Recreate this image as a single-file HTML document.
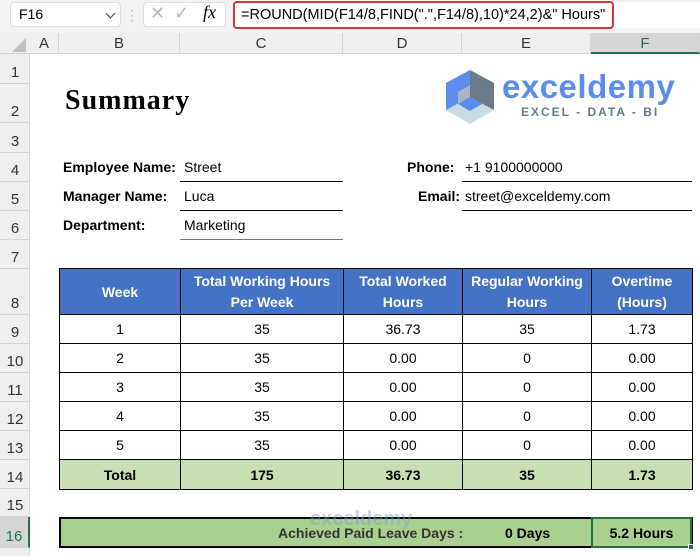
<!DOCTYPE html>
<html><head><style>
*{margin:0;padding:0;box-sizing:border-box}
body{width:700px;height:556px;overflow:hidden;background:#fff;font-family:"Liberation Sans",Calibri,sans-serif;position:relative;font-size:14px;color:#000}
.a{position:absolute}
.ch{position:absolute;top:33px;height:21px;border-right:1px solid #d4d4d4;text-align:center;font-size:15px;line-height:21px;color:#333}
.rh{position:absolute;left:0;width:30px;border-bottom:1px solid #d4d4d4;text-align:center;font-size:15px;color:#333;display:flex;align-items:flex-end;justify-content:center;padding-bottom:2px}
.c{position:absolute;display:flex;align-items:center;justify-content:center;border-right:1px solid #000;border-bottom:1px solid #000;font-size:14px}
.lbl{position:absolute;font-weight:bold;font-size:14px}
.val{position:absolute;font-size:14px}
.ul{position:absolute;height:1px;background:#000}
</style></head><body>
<div class="a" style="left:0;top:0;width:700px;height:33px;background:#f3f3f3"></div>
<div class="a" style="left:10px;top:2px;width:111px;height:25px;background:#fff;border:1px solid #ddd;border-radius:4px;font-size:14px;line-height:23px;padding-left:8px">F16<span class="a" style="left:96px;top:7px;width:7px;height:7px;border-right:1.5px solid #444;border-bottom:1.5px solid #444;transform:rotate(45deg)"></span></div>
<div class="a" style="left:130px;top:8px;color:#999;font-size:12px;line-height:5px">·<br>·<br>·</div>
<div class="a" style="left:143px;top:2px;width:83px;height:25px;background:#fff;border:1px solid #ddd;border-radius:4px"></div>
<div class="a" style="left:150px;top:3px;font-size:18px;color:#bbb">✕</div>
<div class="a" style="left:174px;top:3px;font-size:18px;color:#bbb">✓</div>
<div class="a" style="left:203px;top:2px;font-size:18px;font-style:italic;font-family:'Liberation Serif',serif">fx</div>
<div class="a" style="left:233px;top:1px;width:381px;height:28px;background:#fff;border:2px solid #d9343a;border-radius:4px;font-size:14.5px;line-height:24px;padding-left:6px">=ROUND(MID(F14/8,FIND(".",F14/8),10)*24,2)&amp;" Hours"</div>
<div class="a" style="left:614px;top:2px;width:86px;height:26px;background:#fff"></div>
<div class="a" style="left:0;top:33px;width:700px;height:21px;background:#efefef;border-bottom:1px solid #d4d4d4"></div>
<div class="a" style="left:0;top:54px;width:30px;height:502px;background:#efefef;border-right:1px solid #d4d4d4"></div>
<div class="a" style="left:12px;top:38px;width:0;height:0;border-left:14px solid transparent;border-bottom:14px solid #c0c0c0"></div>
<div class="ch" style="left:30px;width:29px">A</div>
<div class="ch" style="left:59px;width:121px">B</div>
<div class="ch" style="left:180px;width:163px">C</div>
<div class="ch" style="left:343px;width:119px">D</div>
<div class="ch" style="left:462px;width:129px">E</div>
<div class="ch" style="left:591px;width:109px;background:#d6d6d6;border-bottom:2px solid #217346;color:#217346">F</div>
<div class="rh" style="top:54px;height:30px">1</div>
<div class="rh" style="top:84px;height:39px">2</div>
<div class="rh" style="top:123px;height:30px">3</div>
<div class="rh" style="top:153px;height:29px">4</div>
<div class="rh" style="top:182px;height:29px">5</div>
<div class="rh" style="top:211px;height:29px">6</div>
<div class="rh" style="top:240px;height:29px">7</div>
<div class="rh" style="top:269px;height:46px">8</div>
<div class="rh" style="top:315px;height:29px">9</div>
<div class="rh" style="top:344px;height:29px">10</div>
<div class="rh" style="top:373px;height:29px">11</div>
<div class="rh" style="top:402px;height:29px">12</div>
<div class="rh" style="top:431px;height:29px">13</div>
<div class="rh" style="top:460px;height:29px">14</div>
<div class="rh" style="top:489px;height:28px">15</div>
<div class="rh" style="top:517px;height:31px;background:#d6d6d6;color:#217346;border-right:2px solid #217346">16</div>

<div class="a" style="left:65px;top:85px;font-family:'Liberation Serif',serif;font-weight:bold;font-size:28px;letter-spacing:1px">Summary</div>

<svg class="a" style="left:446px;top:70px" width="48" height="54" viewBox="0 0 48 54">
<polygon points="24,0 48,13 48,40 24,54 0,40 0,13" fill="#c9dbe3"/>
<polygon points="24,0 48,13 48,40 24,27" fill="#6b7a88"/>
<polygon points="24,0 0,13 0,40 24,27" fill="#5b8def"/>
<polygon points="12,22 24,15 36,22 36,34 24,41 12,34" fill="#a7b8c2"/>
<polygon points="12,34 24,27 36,34 24,41" fill="#5b8def"/>
<polygon points="24,15 36,22 36,34 24,27" fill="#6b7a88"/>
</svg>
<div class="a" style="left:502px;top:68px;font-size:33px;font-weight:bold;color:#5b8def;letter-spacing:0.5px">exceldemy</div>
<div class="a" style="left:521px;top:105px;font-size:12px;font-weight:bold;color:#6b7a88;letter-spacing:2px">EXCEL - DATA - BI</div>

<div class="lbl" style="left:63px;top:159px">Employee Name:</div>
<div class="val" style="left:184px;top:159px">Street</div>
<div class="ul" style="left:180px;top:181px;width:163px"></div>
<div class="lbl" style="left:63px;top:188px">Manager Name:</div>
<div class="val" style="left:184px;top:188px">Luca</div>
<div class="ul" style="left:180px;top:210px;width:163px"></div>
<div class="lbl" style="left:63px;top:217px">Department:</div>
<div class="val" style="left:184px;top:217px">Marketing</div>
<div class="ul" style="left:180px;top:239px;width:163px;background:#777"></div>
<div class="lbl" style="left:407px;top:159px">Phone:</div>
<div class="val" style="left:465px;top:159px">+1 9100000000</div>
<div class="ul" style="left:462px;top:181px;width:230px"></div>
<div class="lbl" style="left:418px;top:188px">Email:</div>
<div class="val" style="left:465px;top:188px">street@exceldemy.com</div>
<div class="ul" style="left:462px;top:210px;width:230px"></div>

<div class="a" style="left:59px;top:268px;width:634px;height:222px;border-left:1px solid #000;border-top:1px solid #000"></div>
<div class="c" style="left:60px;top:269px;width:121px;height:46px;background:#4472c4;color:#fff;font-weight:bold">Week</div>
<div class="c" style="left:181px;top:269px;width:163px;height:46px;background:#4472c4;color:#fff;font-weight:bold;text-align:center;line-height:21px">Total Working Hours<br>Per Week</div>
<div class="c" style="left:344px;top:269px;width:119px;height:46px;background:#4472c4;color:#fff;font-weight:bold;text-align:center;line-height:21px">Total Worked<br>Hours</div>
<div class="c" style="left:463px;top:269px;width:129px;height:46px;background:#4472c4;color:#fff;font-weight:bold;text-align:center;line-height:21px">Regular Working<br>Hours</div>
<div class="c" style="left:592px;top:269px;width:101px;height:46px;background:#4472c4;color:#fff;font-weight:bold;text-align:center;line-height:21px">Overtime<br>(Hours)</div>

<div class="c" style="left:60px;top:315px;width:121px;height:29px">1</div><div class="c" style="left:181px;top:315px;width:163px;height:29px">35</div><div class="c" style="left:344px;top:315px;width:119px;height:29px">36.73</div><div class="c" style="left:463px;top:315px;width:129px;height:29px">35</div><div class="c" style="left:592px;top:315px;width:101px;height:29px">1.73</div>
<div class="c" style="left:60px;top:344px;width:121px;height:29px">2</div><div class="c" style="left:181px;top:344px;width:163px;height:29px">35</div><div class="c" style="left:344px;top:344px;width:119px;height:29px">0.00</div><div class="c" style="left:463px;top:344px;width:129px;height:29px">0</div><div class="c" style="left:592px;top:344px;width:101px;height:29px">0.00</div>
<div class="c" style="left:60px;top:373px;width:121px;height:29px">3</div><div class="c" style="left:181px;top:373px;width:163px;height:29px">35</div><div class="c" style="left:344px;top:373px;width:119px;height:29px">0.00</div><div class="c" style="left:463px;top:373px;width:129px;height:29px">0</div><div class="c" style="left:592px;top:373px;width:101px;height:29px">0.00</div>
<div class="c" style="left:60px;top:402px;width:121px;height:29px">4</div><div class="c" style="left:181px;top:402px;width:163px;height:29px">35</div><div class="c" style="left:344px;top:402px;width:119px;height:29px">0.00</div><div class="c" style="left:463px;top:402px;width:129px;height:29px">0</div><div class="c" style="left:592px;top:402px;width:101px;height:29px">0.00</div>
<div class="c" style="left:60px;top:431px;width:121px;height:29px">5</div><div class="c" style="left:181px;top:431px;width:163px;height:29px">35</div><div class="c" style="left:344px;top:431px;width:119px;height:29px">0.00</div><div class="c" style="left:463px;top:431px;width:129px;height:29px">0</div><div class="c" style="left:592px;top:431px;width:101px;height:29px">0.00</div>
<div class="c" style="left:60px;top:460px;width:121px;height:30px;background:#c6e0b4;font-weight:bold">Total</div><div class="c" style="left:181px;top:460px;width:163px;height:30px;background:#c6e0b4;font-weight:bold">175</div><div class="c" style="left:344px;top:460px;width:119px;height:30px;background:#c6e0b4;font-weight:bold">36.73</div><div class="c" style="left:463px;top:460px;width:129px;height:30px;background:#c6e0b4;font-weight:bold">35</div><div class="c" style="left:592px;top:460px;width:101px;height:30px;background:#c6e0b4;font-weight:bold">1.73</div>

<div class="a" style="left:59px;top:517px;width:634px;height:31px;background:#a9d08e;border:2px solid #000"></div>
<div class="a" style="left:278px;top:525px;font-weight:bold;color:#333">Achieved Paid Leave Days :</div>
<div class="a" style="left:505px;top:525px;font-weight:bold">0 Days</div>
<div class="a" style="left:591px;top:517px;width:101px;height:31px;border:2px solid #217346;background:#a9d08e;display:flex;align-items:center;justify-content:center;font-weight:bold">5.2 Hours</div>
<div class="a" style="left:688px;top:544px;width:6px;height:6px;background:#217346;border:1px solid #fff"></div>
<div class="a" style="left:310px;top:508px;font-size:20px;font-weight:bold;color:#7e9fd8;opacity:0.45">exceldemy</div>
</body></html>
